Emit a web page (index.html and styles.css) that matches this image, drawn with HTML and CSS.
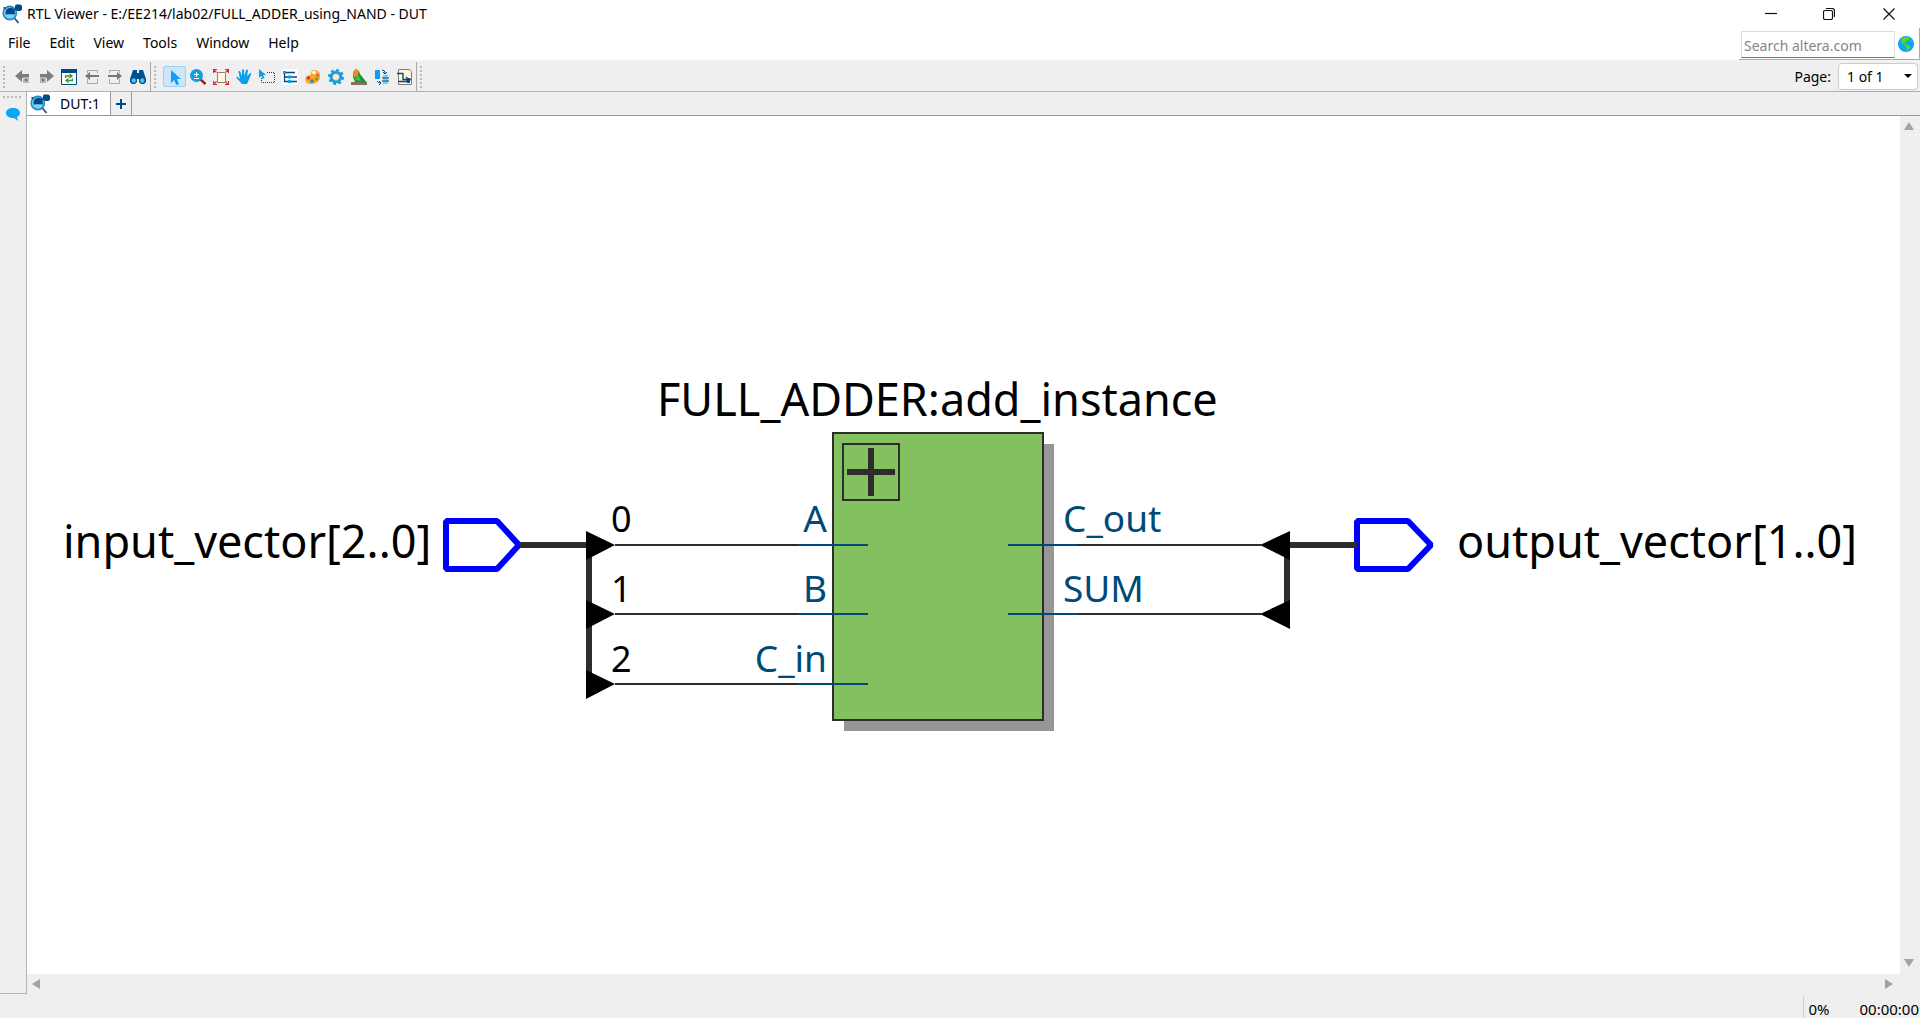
FILE: index.html
```html
<!DOCTYPE html>
<html lang="en">
<head>
<meta charset="utf-8">
<title>RTL Viewer - E:/EE214/lab02/FULL_ADDER_using_NAND - DUT</title>
<link rel="stylesheet" href="styles.css">
</head>
<body>
<svg class="defs" aria-hidden="true">
  <symbol id="logo" viewBox="0 0 20 20">
    <path d="M11.500 13 16.500 19" stroke="#0a5a96" stroke-width="1.800" fill="none"/>
    <circle cx="7.800" cy="9" r="6.600" fill="#7fd0f5" stroke="#1a8fc8" stroke-width="1.600"/>
    <path d="M3.500 8a5 5 0 0 1 9-2l.5 4.500c-3-.5-6-.5-9.500 0z" fill="#004a86"/>
    <path d="M3.500 4.500 1.500 3.500M11 6l4-2" stroke="#004a86" stroke-width="1.500"/>
    <path d="M14 .5h4.500L20 2v3.500L18.500 7H15l-2-2V1.500z" fill="#004a86"/>
  </symbol>
</svg>
<div class="window">
  <header class="titlebar">
    <svg class="logo"><use href="#logo"/></svg>
    <h1>RTL Viewer - E:/EE214/lab02/FULL_ADDER_using_NAND - DUT</h1>
    <div class="window-buttons">
      <button aria-label="Minimize"><svg viewBox="0 0 12 12"><path d="M0 5.500h12"/></svg></button>
      <button aria-label="Restore"><svg viewBox="0 0 12 12"><rect x=".5" y="2.500" width="9" height="9" rx="1.500"/><path d="M3 .5h6a2.500 2.500 0 0 1 2.500 2.500v6"/></svg></button>
      <button aria-label="Close"><svg viewBox="0 0 12 12"><path d="M.5.500l11 11M11.500.500l-11 11"/></svg></button>
    </div>
  </header>

  <div class="menubar">
    <nav class="menus">
      <button>File</button><button>Edit</button><button>View</button><button>Tools</button><button>Window</button><button>Help</button>
    </nav>
    <form class="search">
      <input type="text" placeholder="Search altera.com" aria-label="Search altera.com">
      <button type="button" aria-label="Search the web"><svg viewBox="0 0 16 16"><circle cx="8" cy="8" r="8" fill="#0aa5f5"/><path d="M3 2.500 8 1l3.500 1-1 2.500-2 .5-.5 2-2-.5 1.500 2 3 .5 2 2-1.500 2.500L9 15l-1-4-2-2.500-3-2z" fill="#57d52b"/><path d="M12.500 3.500l2 2-1 1.500z" fill="#57d52b"/></svg></button>
    </form>
  </div>

  <div class="toolbar">
    <div class="group history">
      <span class="grip"></span>
      <button aria-label="Back"><svg viewBox="0 0 16 16"><path d="M0 7 7 1v4h7v4H7v4z" fill="#7d7d7d"/><path d="M8 8h6v6H8z" fill="#b5b5b5"/><path d="M10 10h2v2h-2z" fill="#666"/></svg></button>
      <button aria-label="Forward"><svg viewBox="0 0 16 16"><path d="M16 7 9 1v4H2v4h7v4z" fill="#7d7d7d"/><path d="M2 8h6v6H2z" fill="#b5b5b5"/><path d="M4 10h2v2H4z" fill="#666"/></svg></button>
      <button aria-label="Refresh"><svg viewBox="0 0 16 16"><path d="M.5.500h15v15H.5z" fill="#fff" stroke="#004a86"/><path d="M0 0h16v4H0z" fill="#004a86"/><path d="M4.500 9V7h6M8.500 5l2.500 2-2.500 2M11.500 9.500v2h-6M7.500 9.500l-2.500 2 2.500 2" fill="none" stroke="#44962e" stroke-width="1.300"/></svg></button>
      <button aria-label="Previous page"><svg viewBox="0 0 16 16"><path d="M3.500 4V1.500h10V4M3.500 10v4.500h10V10" fill="none" stroke="#a8a8a8"/><path d="M15 7H4" stroke="#777" stroke-width="2"/><path d="M1 7 6 3v8z" fill="#777"/></svg></button>
      <button aria-label="Next page"><svg viewBox="0 0 16 16"><path d="M2.500 4V1.500h10V4M2.500 10v4.500h10V10" fill="none" stroke="#a8a8a8"/><path d="M1 7h11" stroke="#777" stroke-width="2"/><path d="M15 7 10 3v8z" fill="#777"/></svg></button>
      <button aria-label="Find"><svg viewBox="0 0 16 16"><path d="M3 1h4v3h2V1h4l3 9v3l-2 2h-3l-2-2v-3H7v3l-2 2H2l-2-2v-3z" fill="#00518f"/><circle cx="3.700" cy="11.500" r="2.200" fill="#5bbcf0"/><circle cx="12.300" cy="11.500" r="2.200" fill="#5bbcf0"/></svg></button>
    </div>
    <div class="group">
      <span class="grip"></span>
      <button class="active" aria-label="Selection tool"><svg viewBox="0 0 16 16"><path d="M4 1v13l3-3 2.500 5 2.500-1-2.200-5H14z" fill="#0aa0f5"/></svg></button>
      <button aria-label="Zoom tool"><svg viewBox="0 0 16 16"><path d="M10 10l5.500 5" stroke="#a02020" stroke-width="2.500"/><circle cx="6.500" cy="6.500" r="6.500" fill="#0a9fe8"/><path d="M6.500 3v5M4 5.500h5M4 9.500h5" stroke="#fff" stroke-width="1.200"/></svg></button>
      <button aria-label="Fit in window"><svg viewBox="0 0 16 16"><path d="M4.500 3.500h7l1 1v9h-8z" fill="#fff6dc" stroke="#8d806c"/><path d="M.5 4V.5H4M.5.500l3 3M12 .5h3.500V4M15.500.500l-3 3M.5 12v3.500H4M.5 15.500l3-3M12 15.500h3.500V12M15.500 15.500l-3-3" fill="none" stroke="#e3202b" stroke-width="1.200"/></svg></button>
      <button aria-label="Hand tool"><svg viewBox="0 0 16 16"><path d="M6 15 1 9.500Q0 8 1 7.500l3 2.500L2.500 3q0-1.500 1.500-1L6 7V1q1-1.500 2 0l.5 6L10 1q1.500-1 2 .5L11 7.500 14 4q1.500-.5 1 1.500l-2.500 6L11 15z" fill="#0a9fe8"/></svg></button>
      <button aria-label="Area selection"><svg viewBox="0 0 16 16"><path d="M2.500 9v4.500h13v-10H8" fill="none" stroke="#004a86" stroke-dasharray="1 1"/><path d="M0 0v9l2-2 2 3 1.500-1L4 6h3z" fill="#0a9fe8"/></svg></button>
      <button aria-label="Hierarchy"><svg viewBox="0 0 16 16"><path d="M0 0h16v16H0z" fill="#fff"/><path d="M2.500 3v9.500H7M3 8h4M4 3.500h9M9 8h6M9 12.500h6" fill="none" stroke="#004a86" stroke-width="1.300"/><path d="M1 2h3v3H1zM6 6.500h3v3H6zM6 11h3v3H6z" fill="#0a9fe8"/></svg></button>
      <button aria-label="Colors"><svg viewBox="0 0 16 16"><path d="M9 1c4 0 7 3 6 8-1 4-5 6-9 6-5 0-7-4-5-7 1-2 4-1 5-3 0-3 1-4 3-4z" fill="#ffa51f"/><circle cx="9" cy="3.500" r="1.800" fill="#fff"/><circle cx="3.500" cy="9" r="1.800" fill="#e82a54"/><circle cx="7" cy="12" r="1.800" fill="#0795e8"/><circle cx="11.500" cy="10" r="1.500" fill="#35b34a"/><circle cx="12.500" cy="6.500" r="1.200" fill="#9a52c7"/></svg></button>
      <button aria-label="Options"><svg viewBox="0 0 16 16"><circle cx="8" cy="8" r="7" fill="none" stroke="#0a9fe8" stroke-width="2" stroke-dasharray="2.800 2.700"/><circle cx="8" cy="8" r="4.800" fill="#f2efdc" stroke="#0a9fe8" stroke-width="3"/><circle cx="8" cy="8" r="3.500" fill="none" stroke="#b9a780" stroke-width=".8"/></svg></button>
      <button aria-label="Bird's eye view"><svg viewBox="0 0 16 16"><path d="M0 13h16v3H0z" fill="#8b6d61"/><path d="M2 3 5 0l3 2 1 3 7 9-6-1-6 0-2-5z" fill="#16943b"/><path d="M2 3 5 0l3 2-1 4-4 3z" fill="#f58b1f"/><path d="M7 5 4 11l6 1z" fill="#43bd4f"/></svg></button>
      <button aria-label="Swap view"><svg viewBox="0 0 16 16"><path d="M1 1h5v9H1z" fill="#0a9fe8"/><path d="M9 6h5v9H9z" fill="#7fcdf2"/><path d="M8 1q3 0 3 3M9 3l2 2 2-2M3 12q1 2 4 2M5 12l2 2-2 2M8 9h7M8 12h7" fill="none" stroke="#004a86"/></svg></button>
      <button aria-label="Netlist page"><svg viewBox="0 0 16 16"><path d="M1.500.500h11l2 2v13h-13z" fill="#fff5dc" stroke="#87796b"/><path d="M0 4.500h6v6h8M1 12.500h11M9 8l2.500 2.500L9 13" fill="none" stroke="#004a86" stroke-width="1.400"/><path d="M10 9h3v5h-3z" fill="#004a86"/></svg></button>
    </div>
    <div class="group rest">
      <span class="grip"></span>
      <label class="page">Page: <select><option>1 of 1</option></select></label>
    </div>
  </div>

  <div class="workspace">
    <aside class="dock">
      <span class="dock-grip"></span>
      <button aria-label="Messages"><svg viewBox="0 0 16 16"><path d="M8 2c4 0 7 2 7 5 0 2-1 3-3 4l1 4-4-3C4 12 1 10 1 7s3-5 7-5z" fill="#0aa5f5"/></svg></button>
    </aside>
    <div class="view">
      <div class="tabs">
        <button class="tab"><svg class="logo"><use href="#logo"/></svg>DUT:1</button>
        <button class="add" aria-label="New tab"><svg viewBox="0 0 12 12"><path d="M6 1v10M1 6h10" stroke="#004a86" stroke-width="2"/></svg></button>
      </div>
      <main class="canvas">
        <svg class="schematic" viewBox="27 116 1873 858" role="img" aria-label="Schematic of DUT">
          <g class="block">
            <rect class="shadow" x="844" y="444" width="210" height="287"/>
            <rect class="body" x="833" y="433" width="210" height="287"/>
            <rect class="outline" x="843" y="444" width="56" height="56"/>
            <path class="cross" d="M847 472h48M871 448v48"/>
          </g>
          <g class="wire">
            <path d="M615 545h183M615 614h183M615 684h183M1078 545h183M1078 614h183"/>
          </g>
          <path class="pin" d="M798 545h70M798 614h70M798 684h70M1008 545h70M1008 614h70"/>
          <g class="port">
            <path d="M446 521h51l22 24-22 24h-51z"/>
            <path d="M1357 521h51l23 24-23 24h-51z"/>
          </g>
          <path class="bus" d="M520 545h67M589 545v139M1290 545h67M1287 545v69"/>
          <path class="arrow" d="M586 531v29l29-15zM586 600v29l29-15zM586 670v29l29-15zM1290 531v29l-30-15zM1290 600v29l-30-15z"/>
          <g class="name">
            <text x="657" y="416">FULL_ADDER:add_instance</text>
            <text x="63" y="558">input_vector[2..0]</text>
            <text x="1457" y="558">output_vector[1..0]</text>
          </g>
          <g class="index">
            <text x="611" y="532">0</text>
            <text x="611" y="602">1</text>
            <text x="611" y="672">2</text>
          </g>
          <g class="label end">
            <text x="827" y="532">A</text>
            <text x="827" y="602">B</text>
            <text x="827" y="672">C_in</text>
          </g>
          <g class="label">
            <text x="1063" y="532">C_out</text>
            <text x="1063" y="602">SUM</text>
          </g>
        </svg>
      </main>
      <div class="vscroll"><button aria-label="Scroll up"><svg viewBox="0 0 10 8"><path d="M5 0 10 8H0z"/></svg></button><button aria-label="Scroll down"><svg viewBox="0 0 10 8"><path d="M5 8 10 0H0z"/></svg></button></div>
      <div class="hscroll"><button aria-label="Scroll left"><svg viewBox="0 0 8 10"><path d="M0 5 8 0v10z"/></svg></button><button aria-label="Scroll right"><svg viewBox="0 0 8 10"><path d="M8 5 0 0v10z"/></svg></button></div>
    </div>
  </div>

  <footer class="status"><span class="progress">0%</span><span>00:00:00</span></footer>
</div>
</body>
</html>
```
FILE: styles.css
```css
* { box-sizing: border-box; }
body { margin: 0; font: 14px/20px "Noto Sans", sans-serif; color: #000; background: #efefef; }
button, input, select { font: inherit; color: inherit; }
button { display: flex; align-items: center; justify-content: center; margin: 0; padding: 0; border: 0; background: none; }
svg { display: block; flex: none; }
.defs { position: absolute; width: 0; height: 0; }
.window { display: flex; flex-direction: column; height: 100vh; overflow: hidden; }
.logo { width: 20px; height: 20px; }

.titlebar { display: flex; align-items: center; height: 28px; padding-left: 2px; background: #fff; }
.titlebar h1 { flex: 1; margin: 0 0 0 5px; font-size: 14px; font-weight: 400; }
.window-buttons { display: flex; }
.window-buttons button { width: 58px; height: 28px; }
.window-buttons button:last-child { width: 62px; }
.window-buttons svg { width: 12px; height: 12px; fill: none; stroke: #111; stroke-width: 1.2; }

.menubar { display: flex; justify-content: space-between; height: 34px; background: #fff; border-bottom: 2px solid #f3f3f3; }
.menus { display: flex; gap: 19px; padding: 5px 8px; }
.menus button { height: 20px; }
.search { display: flex; align-items: flex-end; gap: 3px; height: 32px; padding: 0 5px 1px 2px; border-bottom: 1px solid #aaa; border-right: 1px solid #aaa; }
.search input { width: 154px; height: 27px; padding: 2px 2px 0; border: 1px solid #dcdcdc; border-bottom-color: #777; background: #fff; }
.search input::placeholder { color: #858585; opacity: 1; }
.search button { height: 28px; }
.search svg { width: 16px; height: 16px; }

.toolbar { display: flex; height: 30px; border-bottom: 1px solid #b0b0b0; }
.group { display: flex; align-items: center; padding-left: 3px; border-right: 1px solid #aaa; }
.group button { width: 23px; height: 21px; }
.group button svg { width: 16px; height: 16px; }
.group .active { background: #cce6fb; border: 1px solid #9bd0f7; border-radius: 2px; }
.history { padding-right: 1px; }
.grip { width: 3px; height: 22px; margin-right: 6px; background: repeating-linear-gradient(#b9b9b9 0 2px, transparent 2px 4px) 0 0 / 2px 100% no-repeat; }
.history .grip { margin-right: 5px; }
.group.rest { flex: 1; justify-content: space-between; padding-right: 2px; border-right: 0; }
.page { position: relative; display: flex; align-items: center; gap: 7px; }
.page select { appearance: none; width: 80px; height: 27px; padding: 0 8px; border: 1px solid #ccc; border-radius: 4px; background: #fff; }
.page::after { content: ""; position: absolute; right: 6px; top: 11px; border: 4px solid transparent; border-top-color: #000; border-bottom: 0; }

.workspace { display: flex; flex: 1; min-height: 0; }
.dock { display: flex; flex-direction: column; align-items: center; gap: 8px; width: 27px; padding-top: 4px; border: solid #b3b3b3; border-width: 0 1px 1px 0; }
.dock-grip { width: 20px; height: 2px; background: repeating-linear-gradient(90deg, #b9b9b9 0 2px, transparent 2px 4px); }
.dock svg { width: 16px; height: 16px; }
.view { display: grid; flex: 1; grid-template: 24px minmax(0, 1fr) 20px / minmax(0, 1fr) 20px; }
.tabs { grid-column: 1 / -1; display: flex; border-bottom: 1px solid #999; }
.tab { gap: 10px; padding: 0 10px 0 3px; background: #fff; border-right: 1px solid #999; }
.add { width: 21px; border: solid #999; border-width: 0 1px 0 0; }
.add svg { width: 12px; height: 12px; }
.canvas { background: #fff; }
.schematic { width: 100%; height: 100%; }
.vscroll, .hscroll { display: flex; justify-content: space-between; align-items: center; }
.vscroll { flex-direction: column; padding: 6px 2px 7px 0; }
.vscroll svg { width: 10px; height: 8px; }
.hscroll { padding: 0 7px 0 5px; }
.hscroll svg { width: 8px; height: 10px; }
.vscroll path, .hscroll path { fill: #a3a3a3; }

.status { display: flex; justify-content: flex-end; gap: 30px; height: 24px; padding: 2px 1px 0 0; font-size: 15px; }
.progress { padding: 3px 0 0 4px; border-left: 1px solid #d0d0d0; }
.status span:last-child { padding-top: 3px; }

.shadow { fill: #969696; }
.body { fill: #83c060; stroke: #2d2d2d; stroke-width: 2; }
.outline { fill: none; stroke: #2d2d2d; stroke-width: 2; }
.cross, .bus { fill: none; stroke: #2d2d2d; stroke-width: 6; }
.wire { fill: none; stroke: #2d2d2d; stroke-width: 2; }
.pin { fill: none; stroke: #004a77; stroke-width: 2; }
.port { fill: none; stroke: #00f; stroke-width: 6; stroke-linejoin: bevel; }
.name { font-size: 45px; }
.index { font-size: 36px; }
.label { font-size: 37px; fill: #004a77; }
.end { text-anchor: end; }
```
